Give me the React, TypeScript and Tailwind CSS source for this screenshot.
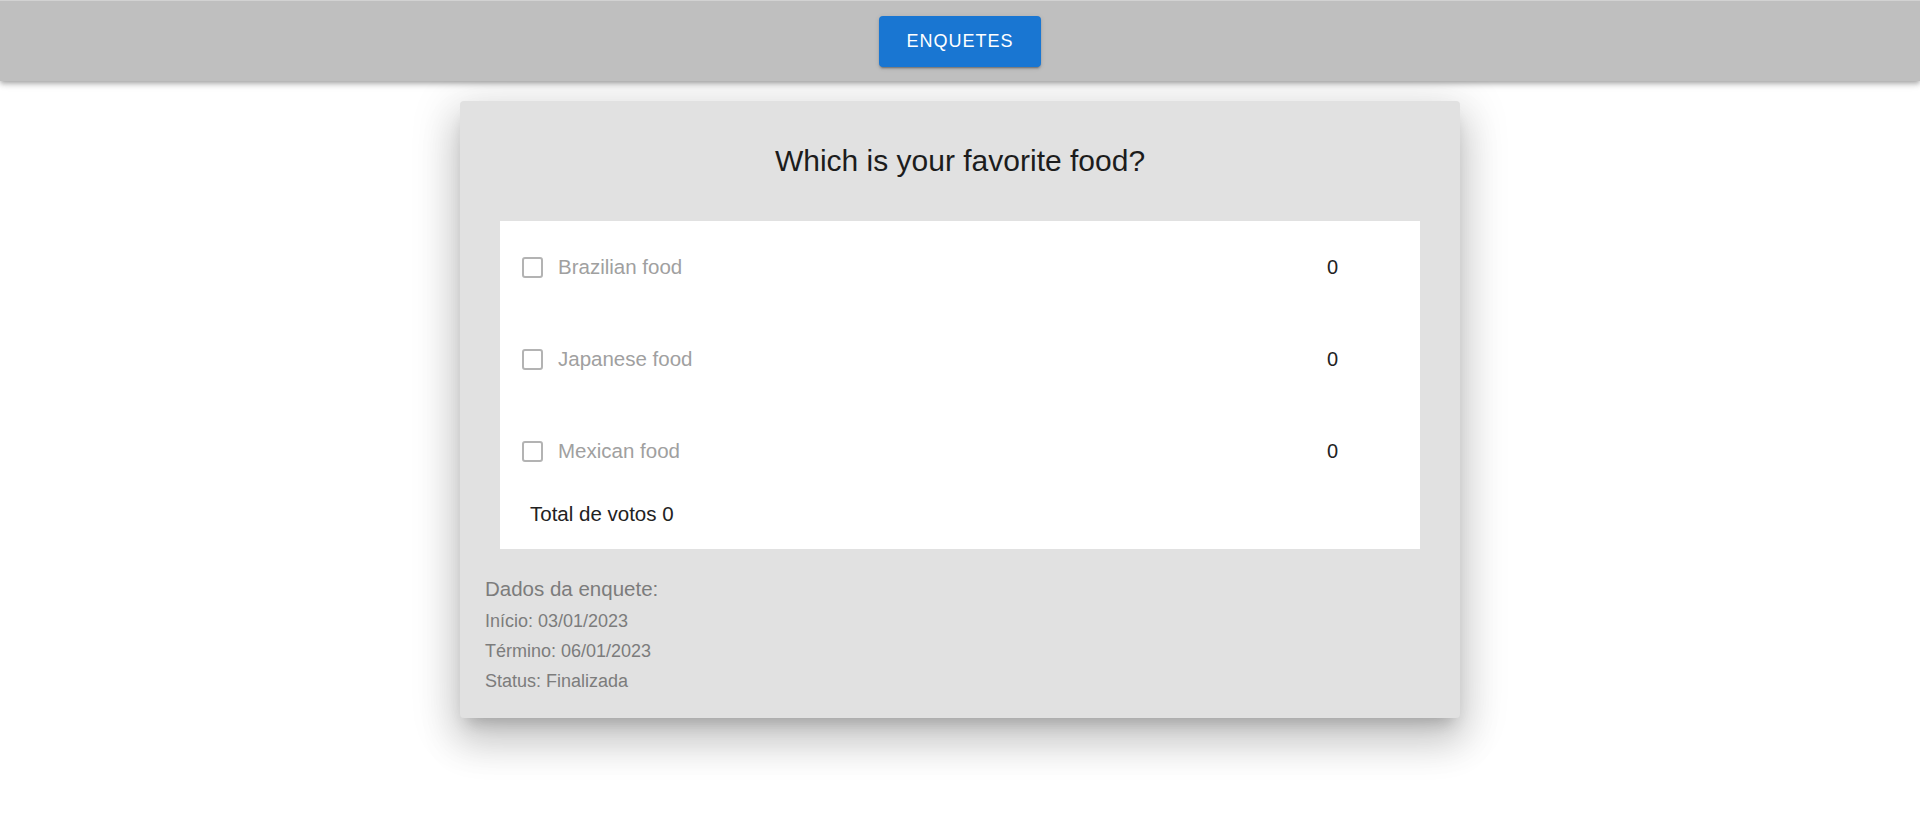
import React from 'react';

const options = [
    { id: 1, label: 'Brazilian food', votes: 0 },
    { id: 2, label: 'Japanese food', votes: 0 },
    { id: 3, label: 'Mexican food', votes: 0 },
];

function OptionRow({ option }: { option: { label: string; votes: number } }) {
    return (
        <div className="h-[92px] flex items-center pl-[22px]">
            <span className="w-[21px] h-[21px] rounded-[3px] border-[2.5px] border-[#b3b3b3] shrink-0"></span>
            <span className="ml-[15px] flex-1 text-[20.5px] leading-[24px] text-[#a0a0a0]">{option.label}</span>
            <span className="w-[93px] text-[20px] leading-[24px] text-[#222]">{option.votes}</span>
        </div>
    );
}

export default function App() {
    const total = options.reduce((s, o) => s + o.votes, 0);
    return (
        <div className="min-h-[830px] bg-white font-['Liberation_Sans',Arial,sans-serif]">
            <header className="relative z-10 h-[81px] bg-[#bfbfbf] border-t border-[#d2d2d2] flex items-center justify-center shadow-[0px_2px_4px_-1px_rgba(0,0,0,0.2),0px_4px_5px_0px_rgba(0,0,0,0.14),0px_1px_10px_0px_rgba(0,0,0,0.12)]">
                <button className="w-[162px] h-[51px] rounded-[4px] bg-[#1976d2] text-white text-[18px] tracking-[1px] uppercase shadow-[0px_3px_1px_-2px_rgba(0,0,0,0.2),0px_2px_2px_0px_rgba(0,0,0,0.14),0px_1px_5px_0px_rgba(0,0,0,0.12)]">
                    Enquetes
                </button>
            </header>

            <main className="flex justify-center pt-[20px]">
                <div className="w-[1000px] bg-[#e1e1e1] rounded-[4px] pt-[42px] pb-[22px] shadow-[0px_11px_15px_-7px_rgba(0,0,0,0.2),0px_24px_38px_3px_rgba(0,0,0,0.14),0px_9px_46px_8px_rgba(0,0,0,0.12)]">
                    <h1 className="text-center text-[30px] leading-[36px] text-[#1c1c1c]">Which is your favorite food?</h1>

                    <div className="mt-[42px] mx-[40px] bg-white pb-[23px]">
                        {options.map(o => <OptionRow key={o.id} option={o} />)}
                        <div className="mt-[5px] pl-[30px] text-[20.5px] leading-[24px] text-[#222]">Total de votos {total}</div>
                    </div>

                    <div className="mt-[28px] pl-[25px] text-[#7c7c7c]">
                        <div className="text-[20.5px] leading-[24px]">Dados da enquete:</div>
                        <div className="mt-[5px] text-[18px] leading-[30px]">
                            <div>Início: 03/01/2023</div>
                            <div>Término: 06/01/2023</div>
                            <div>Status: Finalizada</div>
                        </div>
                    </div>
                </div>
            </main>
        </div>
    );
}
